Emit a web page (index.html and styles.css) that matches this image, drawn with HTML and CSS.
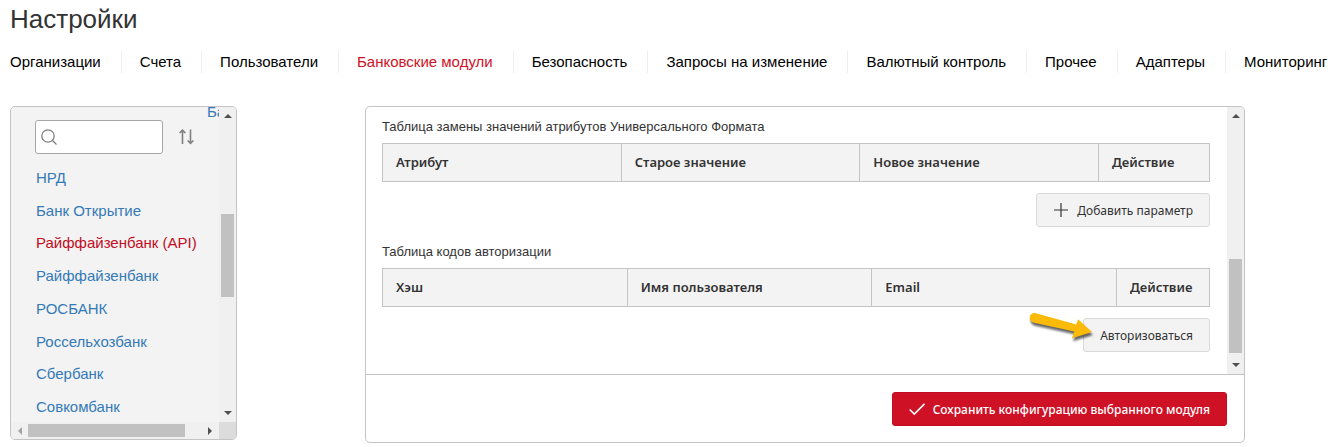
FILE: index.html
```html
<!DOCTYPE html>
<html lang="ru">
<head>
    <meta charset="UTF-8">
    <meta name="viewport" content="width=device-width, initial-scale=1.0">
    <title>Настройки</title>
    <link rel="stylesheet" href="styles.css">
</head>
<body>
    <h1>Настройки</h1>
    <nav class="tabs">
        <a href="#">Организации</a>
        <a href="#">Счета</a>
        <a href="#">Пользователи</a>
        <a href="#" class="active">Банковские модули</a>
        <a href="#">Безопасность</a>
        <a href="#">Запросы на изменение</a>
        <a href="#">Валютный контроль</a>
        <a href="#">Прочее</a>
        <a href="#">Адаптеры</a>
        <a href="#">Мониторинг</a>
    </nav>

    <div class="content">
        <aside class="sidebar">
            <div class="sidebar-view">
                <div class="cut-row"><a href="#">Банк</a></div>
                <div class="search-row">
                    <label class="search">
                        <svg width="16" height="16" viewBox="0 0 16 16" fill="none" stroke="#808080" stroke-width="1.3">
                            <circle cx="7" cy="7" r="6.2"/>
                            <path d="M11.300 11.300L15.500 15.500"/>
                        </svg>
                        <input type="text" aria-label="Поиск">
                    </label>
                    <button class="sort" aria-label="Сортировка">
                        <svg width="16" height="16" viewBox="0 0 16 16" fill="none" stroke="#808080" stroke-width="1.6">
                            <path d="M3.500 15V1.500M.6 4L3.500 1.100L6.400 4"/>
                            <path d="M11.500 .5V14M8.600 11.500L11.500 14.400L14.400 11.500"/>
                        </svg>
                    </button>
                </div>
                <ul class="banks">
                    <li><a href="#">НРД</a></li>
                    <li><a href="#">Банк Открытие</a></li>
                    <li><a href="#" class="active">Райффайзенбанк (API)</a></li>
                    <li><a href="#">Райффайзенбанк</a></li>
                    <li><a href="#">РОСБАНК</a></li>
                    <li><a href="#">Россельхозбанк</a></li>
                    <li><a href="#">Сбербанк</a></li>
                    <li><a href="#">Совкомбанк</a></li>
                </ul>
            </div>
            <div class="bar bar-y">
                <i class="arrow up"></i>
                <div class="track"><div class="thumb thumb-banks"></div></div>
                <i class="arrow down"></i>
            </div>
            <div class="bar bar-x">
                <i class="arrow left"></i>
                <div class="track"><div class="thumb thumb-x"></div></div>
                <i class="arrow right"></i>
            </div>
            <div class="corner"></div>
        </aside>

        <main class="panel">
            <div class="panel-body">
                <div class="panel-view">
                    <p class="caption" id="cap-attrs">Таблица замены значений атрибутов Универсального Формата</p>
                    <table aria-labelledby="cap-attrs">
                        <tr>
                            <th>Атрибут</th>
                            <th>Старое значение</th>
                            <th>Новое значение</th>
                            <th class="action-wide">Действие</th>
                        </tr>
                    </table>
                    <div class="actions">
                        <button class="btn">
                            <svg width="16" height="16" viewBox="0 0 16 16" stroke="#333" stroke-width="1.2">
                                <path d="M8 1V15M1 8H15"/>
                            </svg>
                            Добавить параметр
                        </button>
                    </div>
                    <p class="caption" id="cap-codes">Таблица кодов авторизации</p>
                    <table aria-labelledby="cap-codes">
                        <tr>
                            <th>Хэш</th>
                            <th>Имя пользователя</th>
                            <th>Email</th>
                            <th class="action">Действие</th>
                        </tr>
                    </table>
                    <div class="actions">
                        <button class="btn">
                            Авторизоваться
                            <svg class="pointer" width="72" height="42" viewBox="0 0 72 42">
                                <path fill="#fbba07" d="M7 3L48.300 14.500L50 9.300L64 22L44 28.300L46.300 21.500L5 12.500C-.5 10.500 1.500 2 7 3Z"/>
                            </svg>
                        </button>
                    </div>
                </div>
                <div class="bar bar-y">
                    <i class="arrow up"></i>
                    <div class="track"><div class="thumb thumb-panel"></div></div>
                    <i class="arrow down"></i>
                </div>
            </div>
            <div class="panel-footer">
                <button class="btn btn-save">
                    <svg width="16" height="16" viewBox="0 0 16 16" fill="none" stroke="#fff" stroke-width="1.6">
                        <path d="M.7 8.500L5.300 13L15.500 2.800"/>
                    </svg>
                    Сохранить конфигурацию выбранного модуля
                </button>
            </div>
        </main>
    </div>
</body>
</html>
```
FILE: styles.css
```css
* {
    box-sizing: border-box;
}
body {
    margin: 0;
    padding: 0 0 4px 10px;
    font-family: "Liberation Sans", Arial, sans-serif;
    font-size: 15px;
    color: #333;
    background-color: #fff;
}
h1 {
    margin: 0;
    padding-top: 4px;
    font-size: 26px;
    font-weight: normal;
    line-height: 30px;
}
a {
    color: #337ab7;
    text-decoration: none;
}
.tabs {
    display: flex;
    margin-top: 17px;
    white-space: nowrap;
}
.tabs a {
    padding: 0 20px 0 18px;
    border-right: 1px solid #eee;
    line-height: 22px;
    color: #000;
}
.tabs a:first-child {
    padding-left: 0;
}
.tabs a:last-child {
    padding-right: 0;
    border-right: none;
}
.tabs a.active {
    color: #cf1126;
}
.content {
    display: flex;
    align-items: flex-start;
    gap: 128px;
    margin-top: 33px;
    padding-right: 91px;
}

/* bank list */
.sidebar {
    display: grid;
    grid-template-columns: 1fr 17px;
    grid-template-rows: 1fr 17px;
    flex: 0 0 227px;
    height: 334px;
    border: 1px solid #c4c4c4;
    border-radius: 5px;
    background-color: #f3f3f3;
    overflow: hidden;
}
.sidebar-view {
    display: flex;
    flex-direction: column;
    overflow: hidden;
}
.cut-row {
    display: flex;
    align-items: flex-end;
    height: 13px;
    padding-left: 196px;
    line-height: 16px;
    white-space: nowrap;
    overflow: hidden;
}
.search-row {
    display: flex;
    align-items: center;
    gap: 16px;
    padding-left: 24px;
}
.search {
    display: flex;
    align-items: center;
    width: 128px;
    height: 34px;
    padding: 0 5px;
    border: 1px solid #a6a6a6;
    border-radius: 3px;
    background-color: #fff;
}
.search input {
    width: 100%;
    border: none;
    outline: none;
    background: none;
    font: inherit;
}
.search svg {
    flex: none;
}
.sort {
    display: flex;
    padding: 0;
    border: none;
    background: none;
    cursor: pointer;
}
.banks {
    display: flex;
    flex-direction: column;
    flex: 1;
    justify-content: space-between;
    margin: 0;
    padding: 14px 0 5px 25px;
    list-style: none;
    line-height: 20px;
    white-space: nowrap;
}
.banks a.active {
    color: #c00d23;
}

/* scroll bars */
.bar {
    display: flex;
    align-items: center;
    justify-content: space-between;
    background-color: #f0f0f0;
}
.bar-y {
    flex-direction: column;
    flex: 0 0 17px;
    padding: 7px 0;
}
.bar-x {
    padding: 0 7px;
}
.track {
    display: flex;
    flex: 1;
}
.bar-y .track {
    flex-direction: column;
    width: 13px;
    margin: 6px 0;
}
.bar-x .track {
    height: 13px;
    margin: 0 6px;
}
.thumb {
    background-color: #c1c1c1;
}
.thumb-banks {
    height: 83px;
    margin-top: 90px;
}
.thumb-x {
    width: 157px;
}
.thumb-panel {
    height: 94px;
    margin: auto 0 4px;
}
.arrow {
    border: 4px solid transparent;
}
.up {
    border-top: none;
    border-bottom-color: #505050;
}
.down {
    border-bottom: none;
    border-top-color: #505050;
}
.left {
    border-left: none;
    border-right-color: #a3a3a3;
}
.right {
    border-right: none;
    border-left-color: #505050;
}
.corner {
    background-color: #dcdcdc;
}

/* module settings */
.panel {
    flex: 1;
    min-width: 0;
    border: 1px solid #c4c4c4;
    border-radius: 5px;
    overflow: hidden;
}
.panel-body {
    display: flex;
    border-bottom: 1px solid #c4c4c4;
}
.panel-view {
    flex: 1;
    padding: 10px 17px 22px 16px;
}
.caption {
    margin: 0 0 6px;
    font-size: 13px;
    line-height: 20px;
}
table {
    width: 100%;
    table-layout: fixed;
    border-collapse: collapse;
}
th {
    height: 38px;
    padding: 0 13px 2px;
    border: 1px solid #c4c4c4;
    background-color: #f3f3f3;
    font-family: "Noto Sans", "Open Sans", sans-serif;
    font-size: 13px;
    font-weight: 600;
    text-align: left;
}
.action-wide {
    width: 111px;
}
.action {
    width: 93px;
}
.actions {
    display: flex;
    justify-content: flex-end;
    margin: 11px 0 15px;
}
.actions:last-child {
    margin-bottom: 0;
}
.btn {
    display: flex;
    align-items: center;
    gap: 8px;
    position: relative;
    height: 34px;
    padding: 0 16px;
    border: 1px solid #d9d9d9;
    border-radius: 3px;
    background-color: #f3f3f3;
    color: #333;
    font-family: "Noto Sans", "Open Sans", sans-serif;
    font-size: 12px;
    white-space: nowrap;
    cursor: pointer;
}
.btn-save {
    border-color: #c00d23;
    background-color: #cf1126;
    color: #fff;
    font-weight: 500;
}
.pointer {
    position: absolute;
    top: -9px;
    left: -56px;
    filter: drop-shadow(1px 3px 1px rgba(0, 0, 0, 0.6));
}
.panel-footer {
    display: flex;
    justify-content: flex-end;
    padding: 17px 17px 16px;
}
```
